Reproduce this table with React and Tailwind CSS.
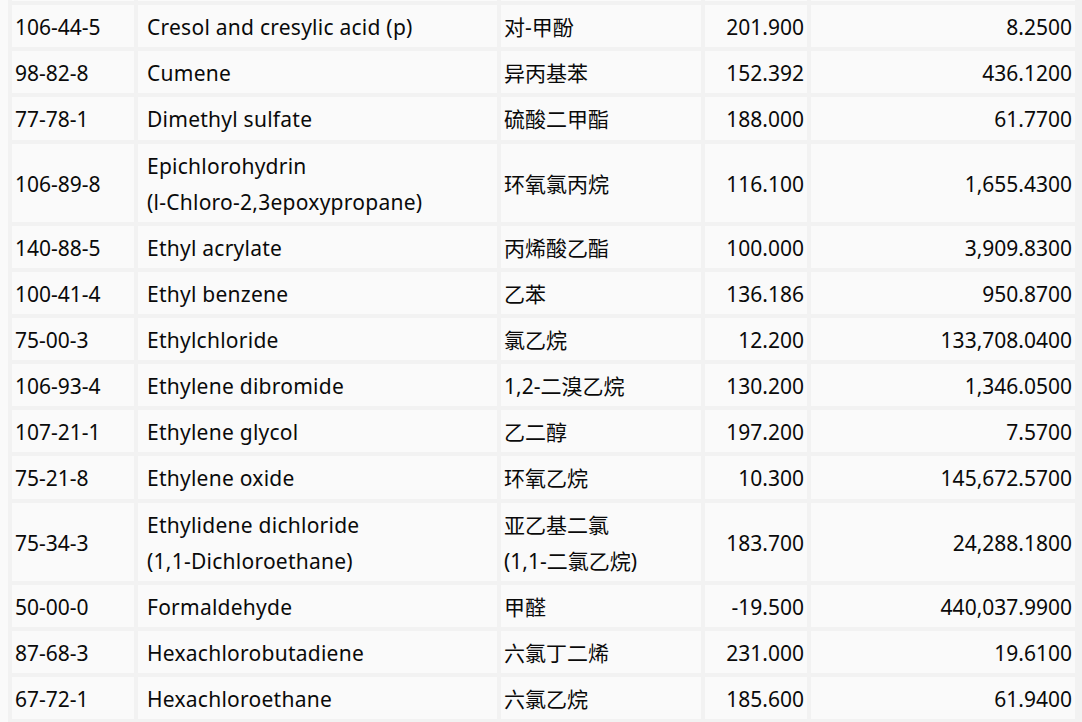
import React from "react";

const rows = [
  { cas: "", name: [""], cn: [""], bp: "", q: "" },
  { cas: "106-44-5", name: ["Cresol and cresylic acid (p)"], cn: ["对-甲酚"], bp: "201.900", q: "8.2500" },
  { cas: "98-82-8", name: ["Cumene"], cn: ["异丙基苯"], bp: "152.392", q: "436.1200" },
  { cas: "77-78-1", name: ["Dimethyl sulfate"], cn: ["硫酸二甲酯"], bp: "188.000", q: "61.7700" },
  { cas: "106-89-8", name: ["Epichlorohydrin", "(l-Chloro-2,3epoxypropane)"], cn: ["环氧氯丙烷"], bp: "116.100", q: "1,655.4300" },
  { cas: "140-88-5", name: ["Ethyl acrylate"], cn: ["丙烯酸乙酯"], bp: "100.000", q: "3,909.8300" },
  { cas: "100-41-4", name: ["Ethyl benzene"], cn: ["乙苯"], bp: "136.186", q: "950.8700" },
  { cas: "75-00-3", name: ["Ethylchloride"], cn: ["氯乙烷"], bp: "12.200", q: "133,708.0400" },
  { cas: "106-93-4", name: ["Ethylene dibromide"], cn: ["1,2-二溴乙烷"], bp: "130.200", q: "1,346.0500" },
  { cas: "107-21-1", name: ["Ethylene glycol"], cn: ["乙二醇"], bp: "197.200", q: "7.5700" },
  { cas: "75-21-8", name: ["Ethylene oxide"], cn: ["环氧乙烷"], bp: "10.300", q: "145,672.5700" },
  { cas: "75-34-3", name: ["Ethylidene dichloride", "(1,1-Dichloroethane)"], cn: ["亚乙基二氯", "(1,1-二氯乙烷)"], bp: "183.700", q: "24,288.1800" },
  { cas: "50-00-0", name: ["Formaldehyde"], cn: ["甲醛"], bp: "-19.500", q: "440,037.9900" },
  { cas: "87-68-3", name: ["Hexachlorobutadiene"], cn: ["六氯丁二烯"], bp: "231.000", q: "19.6100" },
  { cas: "67-72-1", name: ["Hexachloroethane"], cn: ["六氯乙烷"], bp: "185.600", q: "61.9400" },
];

function Lines({ items }) {
  return items.map((t, i) => (
    <React.Fragment key={i}>
      {i > 0 && <br />}
      {t}
    </React.Fragment>
  ));
}

export default function App() {
  // first row is the tail of the row above, scrolled out of view
  const cell = "bg-[#fafafa] px-[3px] pt-[4px] pb-[2px] align-middle";
  return (
    <div
      className="h-[722px] overflow-hidden bg-[#f2f2f2] border-l-8 border-[#fafafa] text-[21px] leading-[36.125px] text-[#0a0a0a]"
      style={{ fontFamily: '"Noto Sans", "Noto Sans CJK SC", sans-serif' }}
    >
      <table className="-mt-[45px] table-fixed border-separate border-spacing-1 w-[1071px]">
        <colgroup>
          <col className="w-[122px]" />
          <col className="w-[359px]" />
          <col className="w-[200px]" />
          <col className="w-[102px]" />
          <col className="w-[264px]" />
        </colgroup>
        <tbody>
          {rows.map((r, i) => (
            <tr key={i}>
              <td className={cell}>{r.cas || "\u00a0"}</td>
              <td className={`${cell} pl-[9px] tracking-[0.25px]`}>
                <Lines items={r.name} />
              </td>
              <td className={cell}>
                <Lines items={r.cn} />
              </td>
              <td className={`${cell} text-right`}>{r.bp}</td>
              <td className={`${cell} text-right`}>{r.q}</td>
            </tr>
          ))}
        </tbody>
      </table>
    </div>
  );
}
